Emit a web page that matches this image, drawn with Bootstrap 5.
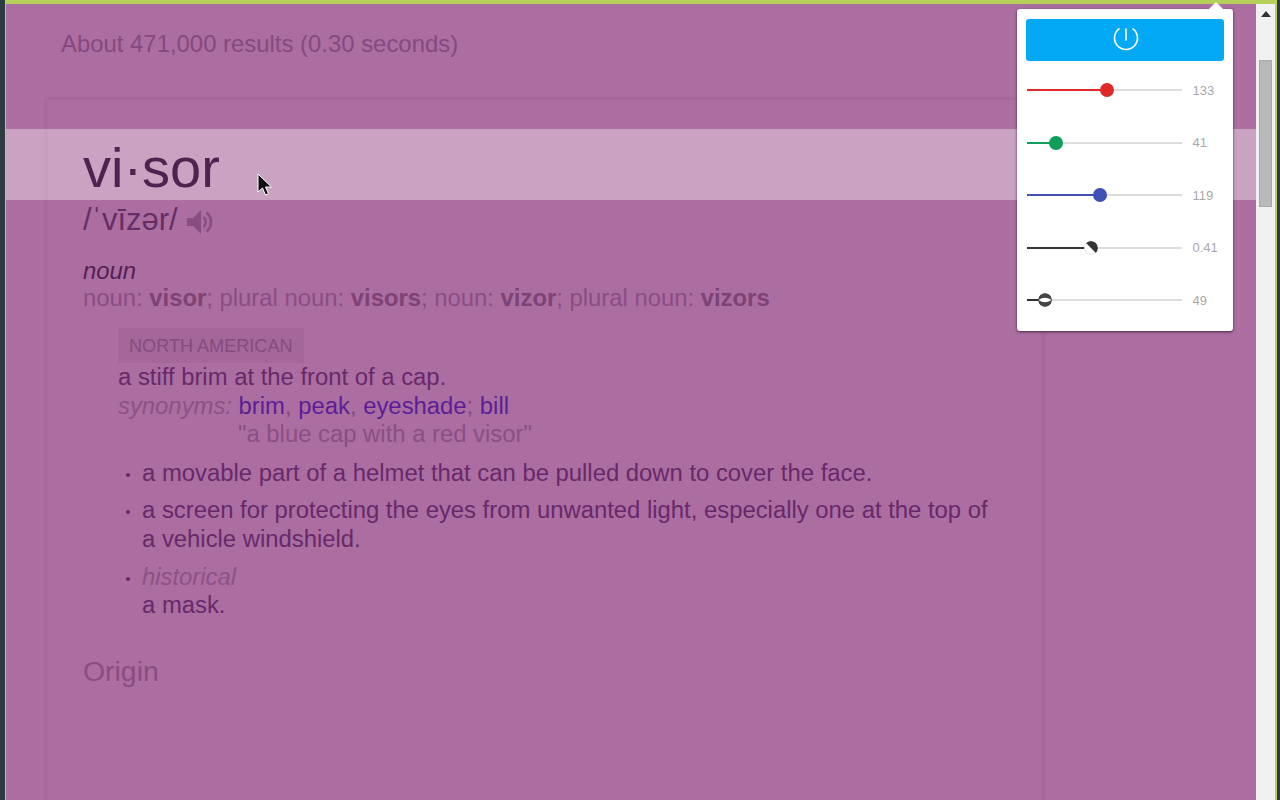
<!DOCTYPE html>
<html lang="en">
<head>
<meta charset="utf-8">
<title>visor</title>
<link href="https://cdn.jsdelivr.net/npm/bootstrap@5.3.0/dist/css/bootstrap.min.css" rel="stylesheet">
<style>
html,body{height:800px;overflow:hidden;margin:0}
body{font-family:"Liberation Sans",Arial,sans-serif;background:#2b3a3d}
.shell{height:800px;width:1280px}
.edge-l{width:5px;background:#2d3c40;flex:none}
.edge-r{width:3px;background:#2d3c40;flex:none}
.lime-v{width:1px;background:#b7d15b;flex:none}
.lime-r{width:2px;background:#b7d15b;flex:none}
.lime-top{height:4px;background:#b4cf5a;flex:none}
.page-col{width:1250px;flex:none}
.sheet{background:#ac6ea0;flex:1 1 auto;overflow:hidden;position:relative}
.stats{font-size:23.9px;line-height:30px;color:#85497f;padding:25px 0 0 55px;height:95px}
.doc{margin-left:40px;width:997px;height:720px;border-left:2px solid #a76a9b;border-right:2px solid #a76a9b;border-top:1px solid #a76a9b;box-shadow:0 0 3px rgba(90,30,90,.22);padding-top:29px;padding-left:35px}
.band{margin-left:-77px;width:1250px;height:71px;background:rgba(255,255,255,.36);padding-left:77px;font-size:56px;line-height:78px;color:#4f2350;white-space:nowrap}
.phon{font-size:31px;line-height:40px;color:#662e66;height:40px;white-space:nowrap}
.phon svg{margin-left:9px;vertical-align:-5px}
.line-txt{font-size:23.85px;line-height:28.6px}
.pos{color:#541f56;font-style:italic;margin-top:17px;line-height:27px}
.forms{color:#8a4d83}
.forms b{color:#7d4276}
.sense{margin-left:35px;margin-top:15.4px;width:880px}
.tagbox{display:inline-block;height:35px;line-height:36px;font-size:18.1px;padding:0 11px;color:#874b80;background:#a5679a;vertical-align:top}
.defn{color:#67296a}
.syn{color:#8d5186;font-style:italic}
.syn a{color:#5c1e96;font-style:normal;text-decoration:none}
.syn span{color:#85497f;font-style:normal}
.ex{color:#8a4f83;margin-left:120px}
.sublist{list-style:none;margin:10px 0 0;padding:0 0 0 24px}
.sublist li{position:relative;margin-bottom:9px}
.sublist li::before{content:"";position:absolute;left:-16px;top:14px;width:4px;height:4px;border-radius:50%;background:#67296a}
.hist{color:#8d5186;font-style:italic}
.origin{font-size:28.4px;line-height:36px;color:#8a4d83;margin-top:33px}
.scroll{width:19px;background:#f1f1f1;flex:none;border-top:4px solid #b4cf5a}
.sc-up{height:20px}
.sc-thumb{height:147px;margin:36px 3px 0;background:#b9b9b9;border:1px solid #a8a8a8}
.panel{position:absolute;left:1017px;top:9px;width:216px;height:322px;background:#fff;border-radius:3px;box-shadow:0 1px 3px rgba(40,10,40,.75);padding:10px 9px;z-index:5}
.panel::before{content:"";position:absolute;right:10px;top:-7px;border:7px solid transparent;border-top:0;border-bottom-color:#fff}
.pwr{display:flex;align-items:center;justify-content:center;height:42px;width:198px;background:#03a9f4;border-radius:3px;margin-bottom:3px}
.sl{height:52.5px;display:flex;align-items:center;font-size:13px;color:#a8a8a8}
.sl:first-of-type{margin-top:3px}
.trk{position:relative;width:155px;height:2px;background:#ddd;flex:none;margin:0 11px 0 .5px}
.fill{height:2px;display:block}
.knob{position:absolute;top:-6px;width:14px;height:14px;margin-left:-7px;border-radius:50%;display:block}
.cur{position:absolute;left:257px;top:173px;z-index:4}
</style>
</head>
<body>
<div class="shell d-flex">
  <div class="edge-l"></div><div class="lime-v"></div>
  <div class="page-col d-flex flex-column">
    <div class="lime-top"></div>
    <div class="sheet">
      <div class="stats">About 471,000 results (0.30 seconds)</div>
      <div class="doc">
        <div class="band">vi·sor</div>
        <div class="phon">/ˈvīzər/<svg width="26" height="26" viewBox="0 0 26 26"><path d="M0 9h6l8-8v24l-8-8H0z" fill="#8a4d83"/><path d="M16.500 8c3 3 3 7 0 10M19.500 3.500c6 5 6 14 0 19" fill="none" stroke="#8a4d83" stroke-width="2.600"/></svg></div>
        <div class="line-txt pos">noun</div>
        <div class="line-txt forms">noun: <b>visor</b>; plural noun: <b>visors</b>; noun: <b>vizor</b>; plural noun: <b>vizors</b></div>
        <div class="sense">
          <div class="tagbox">NORTH AMERICAN</div>
          <div class="line-txt defn">a stiff brim at the front of a cap.</div>
          <div class="line-txt syn">synonyms: <a href="#">brim</a><span>,</span> <a href="#">peak</a><span>,</span> <a href="#">eyeshade</a><span>;</span> <a href="#">bill</a></div>
          <div class="line-txt ex">"a blue cap with a red visor"</div>
          <ul class="sublist">
            <li class="line-txt defn">a movable part of a helmet that can be pulled down to cover the face.</li>
            <li class="line-txt defn">a screen for protecting the eyes from unwanted light, especially one at the top of a vehicle windshield.</li>
            <li class="line-txt defn"><div class="hist">historical</div>a mask.</li>
          </ul>
        </div>
        <div class="origin">Origin</div>
      </div>
    </div>
  </div>
  <div class="scroll">
    <div class="sc-up d-flex justify-content-center align-items-center"><svg width="10" height="6" viewBox="0 0 10 6"><path d="M5 0l5 6H0z" fill="#333"/></svg></div>
    <div class="sc-thumb"></div>
  </div>
  <div class="lime-r"></div>
  <div class="edge-r"></div>
</div>

<svg class="cur" width="17" height="24" viewBox="0 0 17 24"><path d="M1 1v18l4.500-4 3 7 3-1.300-3-6.700h6z" fill="#111" stroke="#fff" stroke-width="1"/></svg>

<div class="panel">
  <div class="pwr"><svg width="28" height="28" viewBox="0 0 28 28"><path d="M8 2.900a11.500 11.500 0 1 0 14 0" fill="none" stroke="#fff" stroke-width="1.600" stroke-linecap="round"/><path d="M15 3v11" stroke="#fff" stroke-width="1.600" stroke-linecap="round"/></svg></div>
  <div class="sl"><div class="trk"><span class="fill" style="width:51.800%;background:#e02a2a"></span><span class="knob" style="left:51.800%;background:#e02a2a"></span></div>133</div>
  <div class="sl"><div class="trk"><span class="fill" style="width:19.200%;background:#0f9d58"></span><span class="knob" style="left:19.200%;background:#0f9d58"></span></div>41</div>
  <div class="sl"><div class="trk"><span class="fill" style="width:47.200%;background:#3f51b5"></span><span class="knob" style="left:47.200%;background:#3f51b5"></span></div>119</div>
  <div class="sl"><div class="trk"><span class="fill" style="width:41.500%;background:#333"></span><svg class="knob" style="left:41.500%" viewBox="0 0 14 14"><circle cx="7" cy="7" r="6.500" fill="#fff" stroke="#ddd" stroke-width="1"/><path d="M2.050 2.050a7 7 0 0 1 9.900 9.900z" fill="#333"/></svg></div>0.41</div>
  <div class="sl"><div class="trk"><span class="fill" style="width:12.200%;background:#333"></span><svg class="knob" style="left:12.200%" viewBox="0 0 14 14"><circle cx="7" cy="7" r="7" fill="#444"/><path d="M.5 7Q7 2.500 13.500 7Q7 11.500 .5 7z" fill="#fff"/></svg></div>49</div>
</div>
</body>
</html>
